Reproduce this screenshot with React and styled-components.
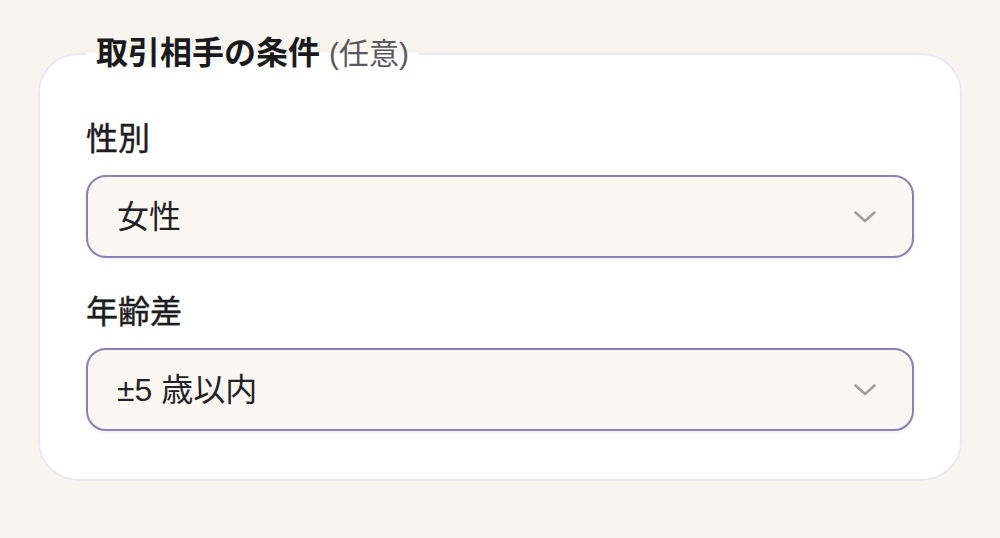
import React from 'react';
import styled, { createGlobalStyle } from 'styled-components';

const GlobalStyle = createGlobalStyle`
  html, body {
    margin: 0;
    background: #f8f4ee;
  }
  body {
    font-family: 'Liberation Sans', 'Noto Sans CJK JP', sans-serif;
    color: #1c1b1f;
  }
`;

const Page = styled.div`
  padding: 32px 38px 0;
`;

const Card = styled.fieldset`
  margin: 0;
  min-inline-size: 0;
  padding: 43px 46px 48px;
  border: 2px solid #ece7f8;
  border-radius: 40px;
  background: #ffffff;
  display: flex;
  flex-direction: column;
  gap: 33px;
`;

const Legend = styled.legend`
  padding: 0 10px;
  font-size: 32px;
  line-height: 42px;
  font-weight: 700;
  color: #1a1a1d;
`;

const Optional = styled.span`
  font-weight: 400;
  color: #5c5862;
  font-size: 30px;
`;

const Field = styled.div`
  display: flex;
  flex-direction: column;
  gap: 15px;
`;

/* no medium face for the CJK font, so thicken the regular one a little */
const Label = styled.label`
  font-size: 32px;
  line-height: 42px;
  font-weight: 400;
  -webkit-text-stroke: 0.45px #1d1c20;
  color: #1d1c20;
`;

const SelectWrap = styled.div`
  position: relative;
`;

const Select = styled.select`
  appearance: none;
  width: 100%;
  height: 83px;
  box-sizing: border-box;
  padding: 0 80px 0 29px;
  border: 2px solid #8b80b6;
  border-radius: 20px;
  background: #faf7f2;
  box-shadow: 0 2px 3px rgba(60, 50, 90, 0.06);
  font-family: 'Liberation Sans', 'Noto Sans CJK JP', sans-serif;
  font-size: 32px;
  color: #222126;
  outline: none;
`;

const Chevron = styled.svg`
  position: absolute;
  right: 38px;
  top: 50%;
  width: 22px;
  height: 12px;
  transform: translateY(-50%);
  pointer-events: none;
`;

function Dropdown({ id, value, options }) {
  return (
    <SelectWrap>
      <Select id={id} defaultValue={value}>
        {options.map((o) => (
          <option key={o} value={o}>{o}</option>
        ))}
      </Select>
      <Chevron viewBox="0 0 22 12" fill="none">
        <path d="M1.5 1.5 L11 10 L20.5 1.5" stroke="#a39e99" strokeWidth="2.6" strokeLinecap="round" strokeLinejoin="round" />
      </Chevron>
    </SelectWrap>
  );
}

export default function App() {
  return (
    <Page>
      <GlobalStyle />
      <Card>
        <Legend>
          取引相手の条件 <Optional>(任意)</Optional>
        </Legend>
        <Field>
          <Label htmlFor="gender">性別</Label>
          <Dropdown id="gender" value="女性" options={['指定なし', '男性', '女性']} />
        </Field>
        <Field>
          <Label htmlFor="age">年齢差</Label>
          <Dropdown id="age" value="±5 歳以内" options={['指定なし', '±5 歳以内', '±10 歳以内']} />
        </Field>
      </Card>
    </Page>
  );
}
